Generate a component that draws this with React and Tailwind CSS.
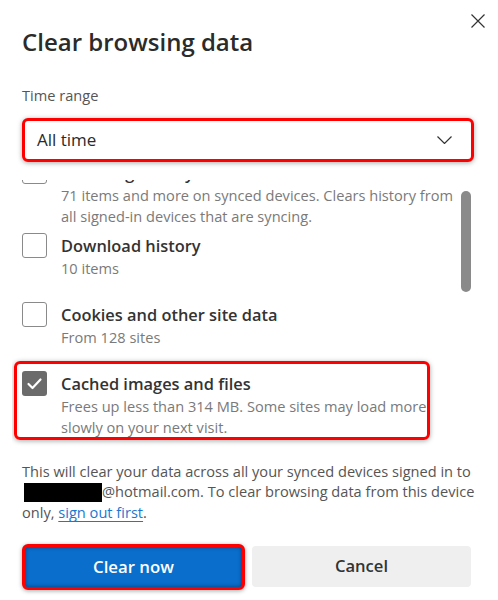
import React from "react";

function Box({ checked }) {
  if (checked) {
    return (
      <div className="w-[25px] h-[25px] shrink-0 rounded-[3px] bg-[#6b6b6b] flex items-center justify-center">
        <svg width="25" height="25" viewBox="0 0 25 25" fill="none">
          <path d="M6.5 13 L10.5 17 L18.5 8.5" stroke="white" strokeWidth="2.2" strokeLinecap="round" strokeLinejoin="round" />
        </svg>
      </div>
    );
  }
  return <div className="w-[25px] h-[25px] shrink-0 rounded-[3px] border border-[#8a8a8a] bg-white" />;
}

function Item({ title, lines, checked, className = "" }) {
  return (
    <div className={"flex gap-[14px] min-h-[69px] pb-[6px] " + className}>
      <Box checked={checked} />
      <div className="pt-[1.5px] flex flex-col">
        <div className="text-[16.4px] leading-[24px] font-semibold text-[#333] whitespace-nowrap">{title}</div>
        {lines.map((l, i) => (
          <div key={i} className="text-[14.6px] leading-[21px] text-[#7a7a7a] whitespace-nowrap">{l}</div>
        ))}
      </div>
    </div>
  );
}

export default function App() {
  return (
    <div className="w-[498px] h-[600px] bg-white overflow-hidden px-[22px] font-['Open_Sans',sans-serif]">
      <div className="flex justify-between items-start">
        <h1 className="mt-[26px] text-[24px] leading-[32px] font-semibold text-[#2b2b2b] whitespace-nowrap">Clear browsing data</h1>
        <button className="mt-[14px] -mr-[9px]">
          <svg width="14" height="14" viewBox="0 0 14 14" fill="none">
            <path d="M0.5 0.5 L13.5 13.5 M13.5 0.5 L0.5 13.5" stroke="#333" strokeWidth="1.2" />
          </svg>
        </button>
      </div>
      <div className="mt-[27px] text-[14.6px] leading-[20px] text-[#555]">Time range</div>
      <div className="mt-[13px] w-[452px] h-[44px] border-[3px] border-[#f00] rounded-[6px] bg-white shadow-[0_1px_5px_rgba(0,0,0,0.35)] flex items-center justify-between pl-[12px] pr-[19px]">
        <span className="text-[17px] leading-[24px] text-[#2b2b2b]">All time</span>
        <svg width="15" height="8" viewBox="0 0 15 8" fill="none">
          <path d="M0.5 0.5 L7.5 7.5 L14.5 0.5" stroke="#333" strokeWidth="1.2" />
        </svg>
      </div>
      <div className="mt-[18px] flex">
        <div className="w-[446px] h-[267px] overflow-hidden pb-[8px] -ml-[10px] pl-[10px]">
          <Item
            className="-mt-[21px]"
            title="Browsing history"
            lines={["71 items and more on synced devices. Clears history from", "all signed-in devices that are syncing."]}
          />
          <Item title="Download history" lines={["10 items"]} />
          <Item title="Cookies and other site data" lines={["From 128 sites"]} />
          <div className="-mt-[10px] -ml-[8px] w-[416px] h-[79px] border-[3px] border-[#f00] rounded-[6px] pl-[5px] pt-[7px] shadow-[0_1px_5px_rgba(0,0,0,0.35)]">
            <div className="flex gap-[14px]">
              <Box checked />
              <div className="pt-[1.5px] flex flex-col">
                <div className="text-[16.4px] leading-[24px] font-semibold text-[#333] whitespace-nowrap">Cached images and files</div>
                <div className="text-[14.6px] leading-[21px] text-[#7a7a7a] whitespace-nowrap">Frees up less than 314 MB. Some sites may load more</div>
                <div className="text-[14.6px] leading-[21px] text-[#7a7a7a] whitespace-nowrap">slowly on your next visit.</div>
              </div>
            </div>
          </div>
        </div>
        <div className="ml-[3px] mt-[11px] w-[10px] h-[101px] rounded-full bg-[#8a8a8a]" />
      </div>
      <div className="mt-[14px] text-[14.6px] leading-[20px] text-[#555]">
        <div className="whitespace-nowrap">This will clear your data across all your synced devices signed in to</div>
        <div className="whitespace-nowrap">
          <span className="inline-block align-top mt-[2px] ml-[2px] w-[78px] h-[19px] bg-black" />
          @hotmail.com. To clear browsing data from this device
        </div>
        <div className="whitespace-nowrap">
          only, <a className="text-[#1a78d0] underline underline-offset-[3px] decoration-1">sign out first</a>.
        </div>
      </div>
      <div className="mt-[22px] flex items-start gap-[7px]">
        <button className="w-[223px] h-[46px] border-[3px] border-[#f00] rounded-[6px] bg-[#0a6ecd] shadow-[inset_0_0_4px_rgba(0,0,0,0.45),0_1px_4px_rgba(0,0,0,0.35)] text-white text-[16.8px] font-semibold flex items-center justify-center">
          Clear now
        </button>
        <button className="mt-[2px] w-[219px] h-[41px] rounded-[4px] bg-[#efefef] text-[#333] text-[16.6px] font-semibold flex items-center justify-center">
          Cancel
        </button>
      </div>
    </div>
  );
}
